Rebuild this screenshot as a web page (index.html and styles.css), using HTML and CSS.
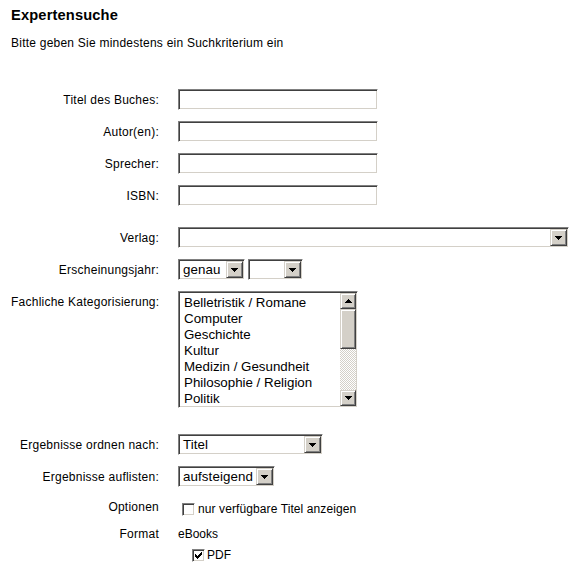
FILE: index.html
```html
<!DOCTYPE html>
<html lang="de">
<head>
<meta charset="utf-8">
<title>Expertensuche</title>
<link rel="stylesheet" href="styles.css">
</head>
<body>
<h1 class="title">Expertensuche</h1>
<p class="intro">Bitte geben Sie mindestens ein Suchkriterium ein</p>
<div class="form">
  <div class="row"><span class="lbl">Titel des Buches:</span><input class="sunken text" type="text"></div>
  <div class="row"><span class="lbl">Autor(en):</span><input class="sunken text" type="text"></div>
  <div class="row"><span class="lbl">Sprecher:</span><input class="sunken text" type="text"></div>
  <div class="row"><span class="lbl">ISBN:</span><input class="sunken text" type="text"></div>

  <div class="row sep-a"><span class="lbl">Verlag:</span>
    <div class="sunken select w-verlag"><span class="val"></span><span class="btn"><svg width="7" height="4" viewBox="0 0 7 4"><path d="M0 0h7v1H0z M1 1h5v1H1z M2 2h3v1H2z M3 3h1v1H3z" fill="#000"/></svg></span></div>
  </div>
  <div class="row"><span class="lbl">Erscheinungsjahr:</span>
    <div class="pair">
      <div class="sunken select w-genau"><span class="val">genau</span><span class="btn"><svg width="7" height="4" viewBox="0 0 7 4"><path d="M0 0h7v1H0z M1 1h5v1H1z M2 2h3v1H2z M3 3h1v1H3z" fill="#000"/></svg></span></div>
      <div class="sunken select w-year"><span class="val"></span><span class="btn"><svg width="7" height="4" viewBox="0 0 7 4"><path d="M0 0h7v1H0z M1 1h5v1H1z M2 2h3v1H2z M3 3h1v1H3z" fill="#000"/></svg></span></div>
    </div>
  </div>
  <div class="row"><span class="lbl">Fachliche Kategorisierung:</span>
    <div class="sunken listbox">
      <div class="items">
        <div>Belletristik / Romane</div>
        <div>Computer</div>
        <div>Geschichte</div>
        <div>Kultur</div>
        <div>Medizin / Gesundheit</div>
        <div>Philosophie / Religion</div>
        <div>Politik</div>
      </div>
      <div class="scroll">
        <span class="btn sb"><svg width="7" height="4" viewBox="0 0 7 4"><path d="M3 0h1v1H3z M2 1h3v1H2z M1 2h5v1H1z M0 3h7v1H0z" fill="#000"/></svg></span>
        <span class="btn thumb"></span>
        <span class="track"></span>
        <span class="btn sb"><svg width="7" height="4" viewBox="0 0 7 4"><path d="M0 0h7v1H0z M1 1h5v1H1z M2 2h3v1H2z M3 3h1v1H3z" fill="#000"/></svg></span>
      </div>
    </div>
  </div>

  <div class="row sep-b"><span class="lbl">Ergebnisse ordnen nach:</span>
    <div class="sunken select w-sort"><span class="val">Titel</span><span class="btn"><svg width="7" height="4" viewBox="0 0 7 4"><path d="M0 0h7v1H0z M1 1h5v1H1z M2 2h3v1H2z M3 3h1v1H3z" fill="#000"/></svg></span></div>
  </div>
  <div class="row"><span class="lbl">Ergebnisse auflisten:</span>
    <div class="sunken select w-order"><span class="val">aufsteigend</span><span class="btn"><svg width="7" height="4" viewBox="0 0 7 4"><path d="M0 0h7v1H0z M1 1h5v1H1z M2 2h3v1H2z M3 3h1v1H3z" fill="#000"/></svg></span></div>
  </div>
  <div class="row sep-c"><span class="lbl">Optionen</span>
    <div class="opt"><span class="sunken cb"></span><span class="opt-text">nur verfügbare Titel anzeigen</span></div>
  </div>
  <div class="row sep-d"><span class="lbl">Format</span>
    <div class="fmt">
      <div class="fmt-head">eBooks</div>
      <div class="opt sub"><span class="sunken cb"><svg width="7" height="7" viewBox="0 0 7 7"><path d="M6 0h1v1H6z M5 1h2v1H5z M0 2h1v1H0z M4 2h3v1H4z M0 3h2v1H0z M3 3h3v1H3z M0 4h5v1H0z M1 5h3v1H1z M2 6h1v1H2z" fill="#000"/></svg></span><span>PDF</span></div>
    </div>
  </div>
</div>
</body>
</html>
```

FILE: styles.css
```css
body {
  margin: 0;
  padding: 7px 11px 0;
  font-family: Arial, "Liberation Sans", sans-serif;
  font-size: 12px;
  color: #000;
  background: #fff;
}

.title {
  margin: 0;
  font-size: 14.67px;
  line-height: 17px;
  font-weight: bold;
  letter-spacing: 0.15px;
}

.intro {
  margin: 12px 0 0;
  line-height: 14px;
  letter-spacing: 0.23px;
}

.form {
  display: flex;
  flex-direction: column;
  gap: 11px;
  margin-top: 39px;
}

.row {
  display: flex;
  align-items: flex-start;
  column-gap: 19px;
}

.sep-a { margin-top: 10px; }
.sep-b { margin-top: 15px; }
.sep-c { margin-top: -2px; }
.sep-d { margin-top: -4px; }

.lbl {
  width: 148px;
  flex: none;
  text-align: right;
  white-space: nowrap;
  line-height: 14px;
  padding-top: 4px;
  letter-spacing: 0.24px;
}

.sunken {
  box-sizing: border-box;
  border: 1px solid;
  border-color: #808080 #fff #fff #808080;
  box-shadow: inset 1px 1px #404040, inset -1px -1px #d4d0c8;
  background: #fff;
}

.text {
  width: 200px;
  height: 21px;
  margin: 0;
  padding: 0 3px;
  outline: none;
  font: 13.33px Arial, "Liberation Sans", sans-serif;
}

.select {
  display: flex;
  align-items: center;
  height: 21px;
  padding: 1px;
}

.val {
  flex: 1;
  font-size: 13.33px;
  line-height: 17px;
  padding-left: 3px;
  white-space: nowrap;
  overflow: hidden;
  letter-spacing: 0.1px;
}

.btn {
  box-sizing: border-box;
  flex: none;
  width: 17px;
  height: 17px;
  display: flex;
  align-items: center;
  justify-content: center;
  border: 1px solid;
  border-color: #d4d0c8 #404040 #404040 #d4d0c8;
  box-shadow: inset 1px 1px #fff, inset -1px -1px #808080;
  background: #d4d0c8;
}

.btn svg { display: block; }

.w-verlag { width: 391px; }
.w-genau { width: 67px; }
.w-year { width: 55px; }
.w-sort { width: 145px; }
.w-order { width: 97px; }

.pair {
  display: flex;
  gap: 3px;
}

.listbox {
  display: flex;
  width: 180px;
  height: 117px;
  padding: 1px;
}

.items {
  flex: 1;
  padding: 2px 0 0 4px;
  font-size: 13.33px;
  line-height: 16px;
  overflow: hidden;
  white-space: nowrap;
}

.scroll {
  display: flex;
  flex-direction: column;
  width: 16px;
  flex: none;
}

.sb {
  width: 16px;
  height: 16px;
}

.thumb {
  width: 16px;
  height: 40px;
}

.track {
  flex: 1;
  background: repeating-conic-gradient(#d4d0c8 0 25%, #fff 0 50%) 0 0 / 2px 2px;
}

.opt {
  display: flex;
  align-items: center;
  gap: 3px;
  padding: 6px 0 0 4px;
  line-height: 14px;
}

.opt-text {
  letter-spacing: 0.1px;
}

.cb {
  width: 13px;
  height: 13px;
  flex: none;
  display: flex;
  align-items: center;
  justify-content: center;
}

.cb svg { display: block; }

.fmt {
  padding-top: 4px;
  line-height: 14px;
}

.opt.sub {
  padding: 7px 0 0 14px;
  gap: 2px;
}
```
